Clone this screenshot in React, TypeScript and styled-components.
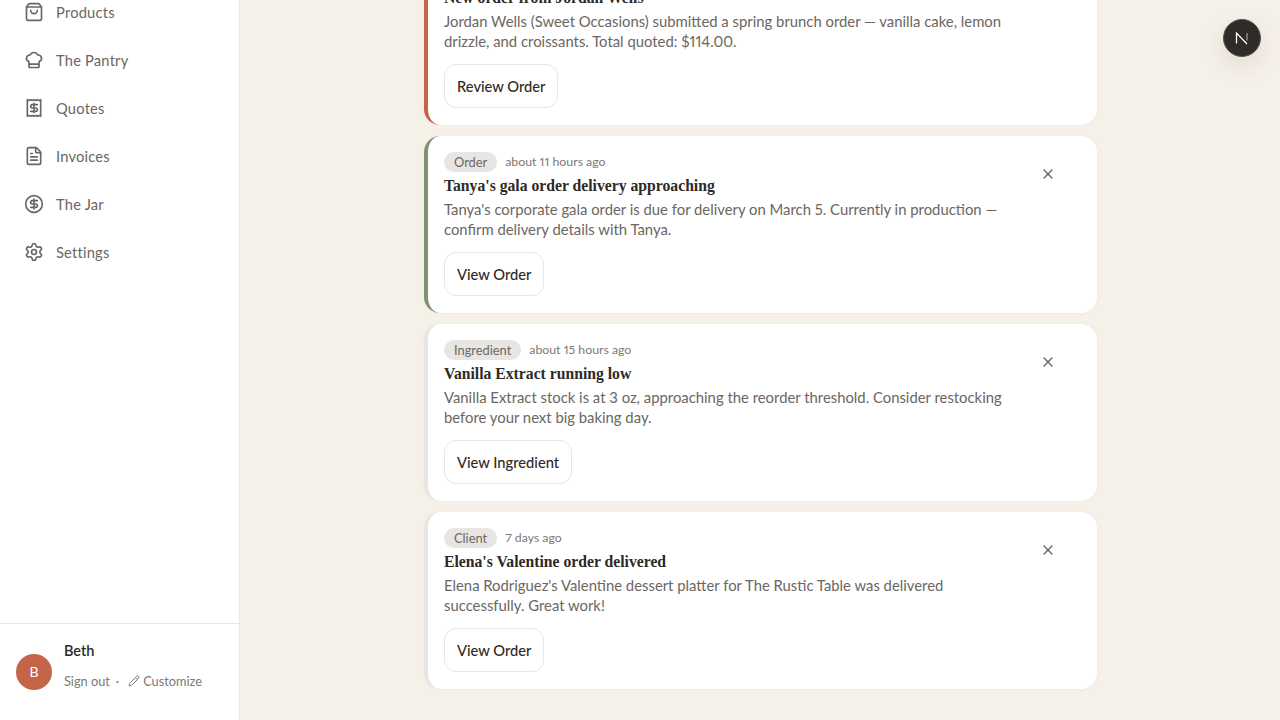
import React from "react";
import styled, { createGlobalStyle } from "styled-components";
import { ShoppingBag, ChefHat, Receipt, FileText, CircleDollarSign, Settings, Pencil, X } from "lucide-react";

const Global = createGlobalStyle`
  html, body { margin: 0; padding: 0; height: 100%; overflow: hidden; }
  body { background: #f5f0e8; font-family: "Lato", "Liberation Sans", sans-serif; font-variant-numeric: proportional-nums; }
  #root { height: 100%; }
`;
const Page = styled.div`display: flex; width: 1280px; height: 720px; overflow: hidden; position: relative;`;
const Sidebar = styled.aside`width: 240px; flex: none; display: flex; flex-direction: column; background: #fff; border-right: 1px solid #ebe8e4; box-sizing: border-box;`;
const Nav = styled.nav`flex: 1; min-height: 0; overflow: hidden; display: flex; flex-direction: column; justify-content: flex-end; padding: 0 8px 347px 24px;`;
const NavItem = styled.a`display: flex; align-items: center; gap: 12px; height: 48px; flex: none; font-size: 14.7px; color: #6b6662; letter-spacing: .2px; svg { width: 20px; height: 20px; stroke-width: 2; }`;
const Footer = styled.div`height: 97px; flex: none; box-sizing: border-box; border-top: 1px solid #e8e6e3; display: flex; align-items: center; gap: 12px; padding: 0 16px;`;
const Avatar = styled.div`width: 36px; height: 36px; border-radius: 50%; background: #c4654a; color: #fff; font-size: 14px; display: flex; align-items: center; justify-content: center; flex: none; padding-bottom: 2px; box-sizing: border-box;`;
const UserBox = styled.div`display: flex; flex-direction: column; gap: 13px; margin-top: -13px;`;
const UserName = styled.div`font-size: 14.5px; font-weight: 600; color: #2d2a26; line-height: 18px;`;
const UserLinks = styled.div`display: flex; align-items: center; gap: 6px; font-size: 12.75px; color: #7d7873; line-height: 16px;`;
const CustomLink = styled.span`display: inline-flex; align-items: center; gap: 3px; margin-left: 3px; svg { width: 12px; height: 12px; }`;
const Main = styled.main`flex: 1; min-width: 0; display: flex; flex-direction: column; justify-content: flex-end; align-items: flex-start; overflow: hidden; padding: 0 0 30.67px 184px; gap: 10.67px;`;
const Card = styled.article<{ $accent: string }>`flex: none; width: 672.5px; box-sizing: border-box; height: 177.33px; background: #fff; border-left: 4px solid ${p => p.$accent}; border-radius: 16px; padding: 16px 16px 17px 16px; display: flex; box-shadow: 0 0 3px rgba(90,70,50,.05);`;
const Body = styled.div`width: 564px; flex: none; display: flex; flex-direction: column; align-items: flex-start;`;
const Meta = styled.div`display: flex; align-items: center; gap: 8px; height: 20px;`;
const Tag = styled.span`background: #e8e6e3; color: #6b6662; font-size: 12.85px; line-height: 20px; padding: 0 10px; border-radius: 10px;`;
const Time = styled.span`font-size: 12.3px; color: #7d7873; padding-bottom: 2px;`;
const Title = styled.h3`margin: 4px 0 0; font: 700 15.7px/20px "Liberation Serif", serif; color: #2d2a26;`;
const Desc = styled.p`margin: 3px 0 0; font-size: 14.85px; line-height: 20px; color: #6b6662; white-space: pre-line;`;
const Action = styled.button`margin-top: 13px; height: 44px; padding: 0 12px 1px; background: #fff; border: 1px solid #e8e6e3; border-radius: 12px; font: 500 14.7px "Lato", sans-serif; color: #2d2a26;`;
const Close = styled.button`margin: 6px 0 0 20px; width: 40px; height: 32px; border: 0; background: none; color: #6b6662; padding: 0; display: flex; align-items: center; justify-content: center; svg { width: 16px; height: 16px; }`;
const Dev = styled.div`position: absolute; left: 1223px; top: 19px; width: 38px; height: 38px; box-sizing: border-box; border-radius: 50%; background: #2e2b29; border: 1px solid #55524f; box-shadow: 0 8px 24px rgba(60,40,20,.1); display: flex; align-items: center; justify-content: center; svg { width: 14px; height: 14px; }`;

const navs = [
  { I: ShoppingBag, t: "Products" }, { I: ChefHat, t: "The Pantry" }, { I: Receipt, t: "Quotes" },
  { I: FileText, t: "Invoices" }, { I: CircleDollarSign, t: "The Jar" }, { I: Settings, t: "Settings" },
];
const cards = [
  { a: "#c4654a", tag: "Order", time: "about 8 hours ago", title: "New order from Jordan Wells", desc: "Jordan Wells (Sweet Occasions) submitted a spring brunch order — vanilla cake, lemon\ndrizzle, and croissants. Total quoted: $114.00.", btn: "Review Order" },
  { a: "#7d9471", tag: "Order", time: "about 11 hours ago", title: "Tanya's gala order delivery approaching", desc: "Tanya's corporate gala order is due for delivery on March 5. Currently in production —\nconfirm delivery details with Tanya.", btn: "View Order" },
  { a: "#e8e6e3", tag: "Ingredient", time: "about 15 hours ago", title: "Vanilla Extract running low", desc: "Vanilla Extract stock is at 3 oz, approaching the reorder threshold. Consider restocking\nbefore your next big baking day.", btn: "View Ingredient" },
  { a: "#e8e6e3", tag: "Client", time: "7 days ago", title: "Elena's Valentine order delivered", desc: "Elena Rodriguez's Valentine dessert platter for The Rustic Table was delivered\nsuccessfully. Great work!", btn: "View Order" },
];

export default function App() {
  return (
    <Page>
      <Global />
      <Sidebar>
        <Nav>{navs.map(({ I, t }) => <NavItem key={t}><I />{t}</NavItem>)}</Nav>
        <Footer>
          <Avatar>B</Avatar>
          <UserBox>
            <UserName>Beth</UserName>
            <UserLinks>Sign out <span>·</span><CustomLink><Pencil />Customize</CustomLink></UserLinks>
          </UserBox>
        </Footer>
      </Sidebar>
      <Main>
        {cards.map(c => (
          <Card key={c.title} $accent={c.a}>
            <Body>
              <Meta><Tag>{c.tag}</Tag><Time>{c.time}</Time></Meta>
              <Title>{c.title}</Title>
              <Desc>{c.desc}</Desc>
              <Action>{c.btn}</Action>
            </Body>
            <Close><X /></Close>
          </Card>
        ))}
      </Main>
      <Dev>
        <svg viewBox="0 0 14 14" fill="none"><path d="M1.5 12.5V2L12 13" stroke="#fff" strokeWidth="1.3" /><path d="M12 2v7.5" stroke="#aaa" strokeWidth="1.1" /></svg>
      </Dev>
    </Page>
  );
}
